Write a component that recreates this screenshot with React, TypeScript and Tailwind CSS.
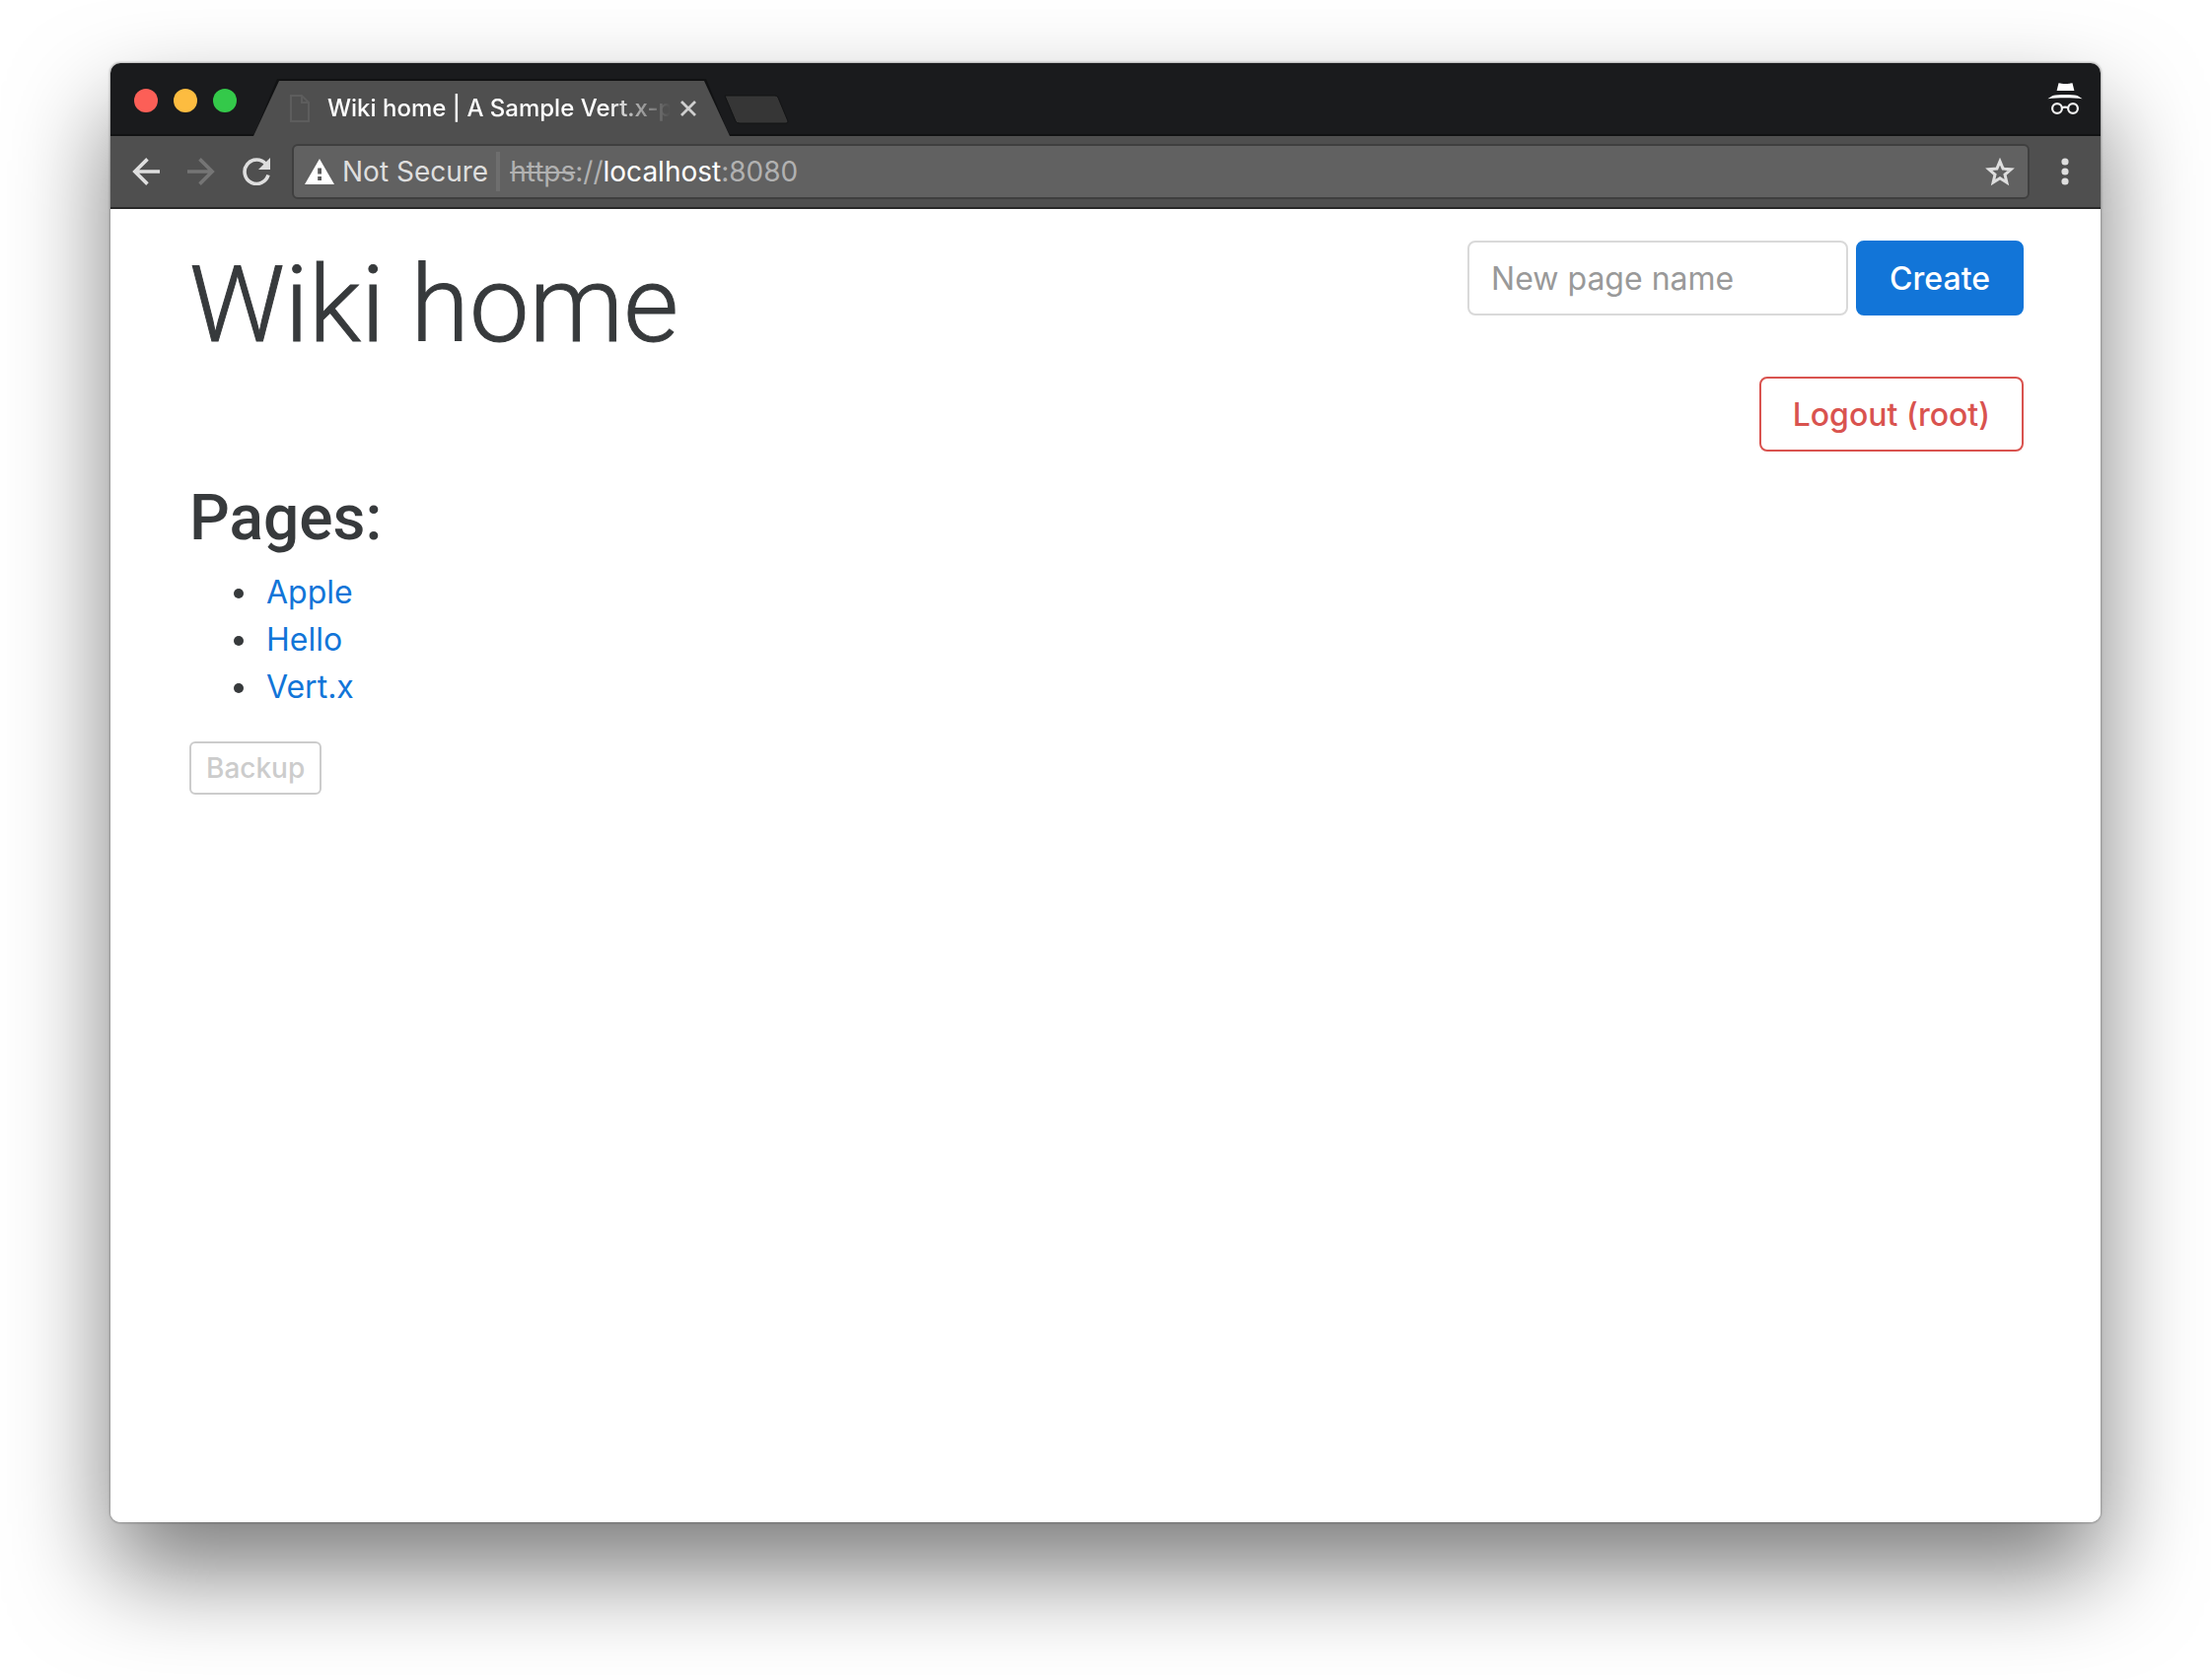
const pages = ["Apple", "Hello", "Vert.x"];

function BackIcon() {
  return (
    <svg viewBox="0 0 28 28" className="size-7" fill="none" stroke="currentColor" strokeWidth="3.6" aria-hidden="true">
      <path d="M28 14H3M15.5 1.4 2.8 14l12.7 12.6" />
    </svg>
  );
}

function ReloadIcon() {
  return (
    <svg viewBox="0 0 28 28" className="size-7" aria-hidden="true">
      <path d="M23.6 6.4A12.2 12.2 0 1 0 26 17.6" fill="none" stroke="currentColor" strokeWidth="3.6" />
      <path d="M28 0v12H16z" fill="currentColor" />
    </svg>
  );
}

function WarningIcon() {
  return (
    <svg viewBox="0 0 30 26" className="h-[26px] w-[30px] shrink-0" aria-hidden="true">
      <path d="M15 0 30 26H0z" fill="#fff" />
      <path d="M13.2 9.5h3.8v6h-3.8zM13.2 18h3.8v4h-3.8z" fill="#5a5a5a" />
    </svg>
  );
}

function StarIcon() {
  return (
    <svg viewBox="0 0 30 29" className="h-[29px] w-[30px]" fill="none" stroke="currentColor" strokeWidth="3" aria-hidden="true">
      <path d="M15 3.6l3.1 7.5 8.1.7-6.2 5.3 1.9 7.9L15 20.8l-6.9 4.2 1.9-7.9-6.2-5.3 8.1-.7z" />
    </svg>
  );
}

function DotsIcon() {
  return (
    <svg viewBox="0 0 8 28" className="h-7 w-2" fill="currentColor" aria-hidden="true">
      <circle cx="4" cy="4" r="3.6" />
      <circle cx="4" cy="14" r="3.6" />
      <circle cx="4" cy="24" r="3.6" />
    </svg>
  );
}

function IncognitoIcon() {
  return (
    <svg viewBox="0 0 36 32" className="h-8 w-9" aria-label="Incognito" role="img">
      <path d="M11.5.2c2 0 3 .8 7 .8s5-.8 7-.8L27.4 8H9.6z" fill="#fff" />
      <path d="M.4 16.2 5.5 13c3-.9 8-1.1 12.5-1.1s9.5.2 12.5 1.1l5.1 3.2C31 15.5 24 15.3 18 15.3s-13 .2-17.6.9z" fill="#fff" />
      <g fill="none" stroke="#f2f2f2" strokeWidth="2.2">
        <circle cx="10" cy="26" r="4.9" />
        <circle cx="26" cy="26" r="4.9" />
        <path d="M14.8 25.2q3.2-1 6.4 0" />
      </g>
    </svg>
  );
}

function FileIcon() {
  return (
    <svg viewBox="0 0 20 28" className="h-7 w-5 shrink-0" fill="none" stroke="#5d5d5d" strokeWidth="2" aria-hidden="true">
      <path d="M1 1h11l7 7v19H1zM12 1v7h7" />
    </svg>
  );
}

function TabStrip() {
  return (
    <div className="flex h-[74px] items-end border-b-2 border-[#111213] bg-[#1a1b1d] pr-[18px] pl-6">
      <div className="mt-1 flex gap-4 self-center">
        <button aria-label="Close window" className="size-6 rounded-full bg-[#fc5f57]" />
        <button aria-label="Minimize window" className="size-6 rounded-full bg-[#fdbc40]" />
        <button aria-label="Zoom window" className="size-6 rounded-full bg-[#34c94a]" />
      </div>
      <div className="relative -mb-0.5 ml-[17px] flex h-[58px] w-[483px] items-center pt-0.5 pr-[34px] pl-[37px]">
        <span className="absolute inset-0 bg-[#111213] [clip-path:polygon(24px_0,calc(100%-24px)_0,100%_100%,0_100%)]" />
        <span className="absolute inset-x-0 top-0.5 bottom-0 bg-[#4f4f4f] [clip-path:polygon(26px_0,calc(100%-26px)_0,100%_100%,0_100%)]" />
        <div className="relative flex min-w-0 flex-1 items-center">
          <FileIcon />
          <span className="mr-2.5 ml-[18px] flex-1 overflow-hidden text-2xl leading-8 font-medium whitespace-nowrap text-white [mask-image:linear-gradient(to_right,black_calc(100%-64px),transparent)]">
            Wiki home | A Sample Vert.x-powered wiki
          </span>
          <button aria-label="Close tab" className="text-[#cfcfcf]">
            <svg viewBox="0 0 16 16" className="size-4" stroke="currentColor" strokeWidth="2.8" aria-hidden="true">
              <path d="M1 1l14 14M15 1 1 15" />
            </svg>
          </button>
        </div>
      </div>
      <button aria-label="New tab" className="mb-2 -ml-1.5">
        <svg viewBox="0 0 66 32" className="h-8 w-[66px]" aria-hidden="true">
          <path d="M1 1h51q2 0 3 2l10 24q0 2-2 2H16q-3 0-4-2z" fill="#363636" stroke="#131415" strokeWidth="1" />
        </svg>
      </button>
      <span className="mb-5 ml-auto">
        <IncognitoIcon />
      </span>
    </div>
  );
}

function Toolbar() {
  return (
    <div className="flex h-[74px] items-center border-b-2 border-[#282828] bg-[#4f4f4f] pr-8 pl-[22px] text-[#dedede]">
      <button aria-label="Back">
        <BackIcon />
      </button>
      <button aria-label="Forward" disabled className="ml-7 rotate-180 text-[#757575]">
        <BackIcon />
      </button>
      <button aria-label="Reload" className="mr-[22px] ml-7">
        <ReloadIcon />
      </button>
      <div className="flex h-14 flex-1 items-center rounded-md border-2 border-[#3f3f3f] bg-[#616161] pr-[13px] pl-[11px] text-[28px] leading-9">
        <WarningIcon />
        <span className="ml-2">Not Secure</span>
        <span className="mr-2.5 ml-2 h-10 w-1 bg-[#6e6e6e]" />
        <span className="flex-1 text-[#b1b1b1]">
          <span className="line-through decoration-2">https</span>://<span className="text-white">localhost</span>:8080
        </span>
        <button aria-label="Bookmark this page">
          <StarIcon />
        </button>
      </div>
      <button aria-label="Menu" className="ml-8">
        <DotsIcon />
      </button>
    </div>
  );
}

export default function App() {
  return (
    <div className="flex min-h-screen flex-col bg-white px-28 pt-16 pb-40 font-['Inter',sans-serif]">
      <div className="flex flex-1 flex-col rounded-[10px] shadow-[0_0_2px_1px_rgba(0,0,0,0.25),0_50px_100px_rgba(0,0,0,0.52)]">
        <div className="flex flex-1 flex-col overflow-hidden rounded-[10px] bg-white">
          <TabStrip />
          <Toolbar />
          <main className="py-8 pr-[78px] pl-20 text-[32px] leading-[48px] text-[#373a3c]">
            <div className="flex items-start justify-between">
              <h1 className="font-['Roboto',sans-serif] text-[108px] leading-[130px] font-light [-webkit-text-stroke:1px_#373a3c]">Wiki home</h1>
              <div className="flex flex-col items-end gap-[62px]">
                <form className="flex gap-2" onSubmit={(e) => e.preventDefault()}>
                  <input
                    type="text"
                    aria-label="New page name"
                    placeholder="New page name"
                    className="h-[76px] w-[386px] rounded-lg border-2 border-[#d9d9d9] bg-white px-[22px] placeholder:text-[#999999]"
                  />
                  <button type="submit" className="h-[76px] rounded-lg border-2 border-[#1275d8] bg-[#1275d8] px-8 pt-0.5 font-medium text-white">
                    Create
                  </button>
                </form>
                <a href="#logout" className="flex h-[76px] items-center rounded-lg border-2 border-[#d9534f] px-8 pt-0.5 font-medium text-[#d9534f]">
                  Logout (root)
                </a>
              </div>
            </div>
            <h2 className="mt-8 font-['Roboto',sans-serif] text-[64px] leading-[72px] font-medium">Pages:</h2>
            <ul className="mt-[15px] list-disc pl-18">
              {pages.map((page) => (
                <li key={page} className="pl-1.5">
                  <a href={`#${page}`} className="text-[#1275d8]">
                    {page}
                  </a>
                </li>
              ))}
            </ul>
            <button className="mt-[31px] block rounded-md border-2 border-[#cccccc] px-[15px] py-1 text-[28px] leading-[42px] font-medium text-[#cccccc]">
              Backup
            </button>
          </main>
        </div>
      </div>
    </div>
  );
}
